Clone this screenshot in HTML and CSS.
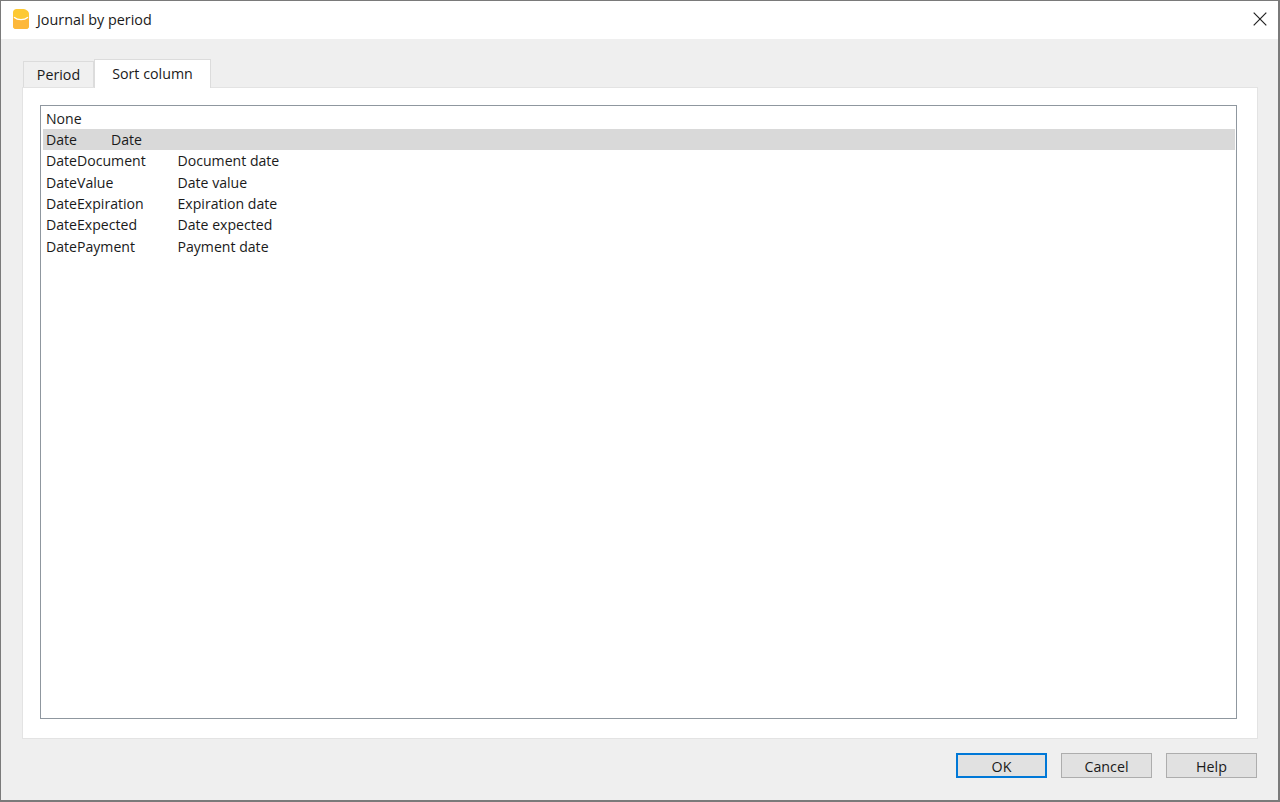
FILE: index.html
```html
<!DOCTYPE html>
<html lang="en">
<head>
<meta charset="utf-8">
<title>Journal by period</title>
<link rel="stylesheet" href="styles.css">
</head>
<body>
<div class="window">
  <header class="titlebar">
    <svg class="app-icon" width="16" height="20" viewBox="0 0 16 20" aria-hidden="true">
      <path d="M0 3.5C0 1.5 1.5 0 3.5 0H9C13 0 16 2 16 5V17C16 18.7 14.7 20 13 20H3C1.3 20 0 18.7 0 17Z" fill="#fdc933"/>
      <path d="M0 8C4 12 12 12 16 8V17C16 18.7 14.7 20 13 20H3C1.3 20 0 18.7 0 17Z" fill="#fdb83a"/>
      <path d="M1 8.2C5 11.4 11 11.4 15 8.2" fill="none" stroke="#fff" stroke-width="1.4"/>
    </svg>
    <span class="title">Journal by period</span>
    <svg class="close" width="14" height="14" viewBox="0 0 14 14" aria-hidden="true">
      <path d="M.7.7 13.3 13.3M13.3.7.7 13.3" stroke="#222" stroke-width="1.2" fill="none"/>
    </svg>
  </header>
  <main class="content">
    <nav class="tabs">
      <div class="tab">Period</div>
      <div class="tab tab-active">Sort column</div>
    </nav>
    <section class="pane">
      <div class="list">
        <div class="row"><span>None</span></div>
        <div class="row row-selected"><span class="name-short">Date</span><span>Date</span></div>
        <div class="row"><span class="name">DateDocument</span><span>Document date</span></div>
        <div class="row"><span class="name">DateValue</span><span>Date value</span></div>
        <div class="row"><span class="name">DateExpiration</span><span>Expiration date</span></div>
        <div class="row"><span class="name">DateExpected</span><span>Date expected</span></div>
        <div class="row"><span class="name">DatePayment</span><span>Payment date</span></div>
      </div>
    </section>
    <footer class="buttons">
      <button class="btn btn-default" type="button">OK</button>
      <button class="btn" type="button">Cancel</button>
      <button class="btn" type="button">Help</button>
    </footer>
  </main>
</div>
</body>
</html>
```
FILE: styles.css
```css
* { box-sizing: border-box; }
html, body { margin: 0; height: 100%; }
body {
  font-family: "Open Sans", "Noto Sans", sans-serif;
  font-size: 14.25px;
  color: #1a1a1a;
  background: #f0f0f0;
  overflow: hidden;
}
.window {
  height: 802px;
  display: flex;
  flex-direction: column;
  border: 1px solid #7a7a7a;
  border-width: 1px 2px 2px 1px;
  background: #efefef;
}
.titlebar {
  height: 38px;
  flex: none;
  display: flex;
  align-items: center;
  background: #fff;
  padding: 0 11px 2px 12px;
}
.app-icon { flex: none; margin-top: -1px; }
.title { margin-left: 8px; font-size: 14.35px; }
.close { margin-left: auto; }
.content {
  flex: 1;
  min-height: 0;
  display: flex;
  flex-direction: column;
  padding: 21px 20px 0 21px;
}
.tabs {
  display: flex;
  align-items: flex-end;
  height: 28px;
  padding-left: 1px;
  flex: none;
  position: relative;
  z-index: 1;
  margin-bottom: -1px;
}
.tab {
  height: 26px;
  width: 71px;
  border: 1px solid #dcdcdc;
  border-bottom: 0;
  background: #f0f0f0;
  text-align: center;
  line-height: 25px;
  margin-bottom: 1px;
}
.tab-active {
  height: 29px;
  width: 117px;
  margin-bottom: 0;
  background: #fff;
  line-height: 27px;
  margin-left: 0;
}
.pane {
  height: 652px;
  flex: none;
  background: #fff;
  border: 1px solid #e3e3e3;
  padding: 17px 20px 19px 17px;
}
.list {
  height: 100%;
  border: 1px solid #8f979f;
  background: #fff;
  padding: 1.4px 1px 0 2px;
  font-size: 14.1px;
}
.row {
  height: 21.33px;
  display: flex;
  align-items: center;
  padding-left: 3px;
  white-space: nowrap;
}
.row-selected { background: #d9d9d9; }
.name { width: 131.5px; flex: none; }
.name-short { width: 65px; flex: none; }
.buttons {
  display: flex;
  justify-content: flex-end;
  gap: 14px;
  padding-top: 14px;
  padding-right: 1px;
}
.btn {
  width: 91px;
  height: 25px;
  font: inherit;
  color: inherit;
  padding: 2px 0 0;
  background: #e1e1e1;
  border: 1px solid #adadad;
}
.btn-default { border: 2px solid #0078d7; }
```
